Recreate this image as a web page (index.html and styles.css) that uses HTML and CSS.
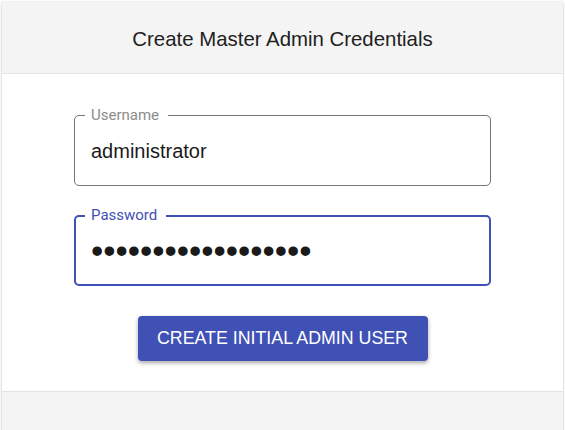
FILE: index.html
```html
<!DOCTYPE html>
<html>
<head>
<meta charset="utf-8">
<link rel="stylesheet" href="styles.css">
</head>
<body>
<div class="card">
  <div class="card-header">Create Master Admin Credentials</div>
  <form class="card-body">
    <fieldset class="field">
      <legend class="field-label">Username</legend>
      <input class="field-input" type="text" value="administrator">
    </fieldset>
    <fieldset class="field field-focused">
      <legend class="field-label">Password</legend>
      <input class="field-input field-secret" type="password" value="administrator12345">
    </fieldset>
    <div class="actions">
      <button class="btn-primary" type="button">CREATE INITIAL ADMIN USER</button>
    </div>
  </form>
  <div class="card-footer"></div>
</div>
</body>
</html>
```

FILE: styles.css
```css
html, body {
  margin: 0;
  padding: 0;
  background: #ffffff;
  font-family: "Liberation Sans", Arial, sans-serif;
  overflow: hidden;
}
.card {
  margin: 2px 2px 0 2px;
  background: #ffffff;
  box-shadow: 0 1px 3px rgba(0,0,0,0.2), 0 0 1px rgba(0,0,0,0.15);
  height: 440px;
  display: flex;
  flex-direction: column;
}
.card-header {
  height: 72px;
  background: #f4f4f4;
  border-bottom: 1px solid #e4e4e4;
  display: flex;
  align-items: center;
  justify-content: center;
  font-size: 20.4px;
  color: #212121;
  padding-top: 3px;
  box-sizing: border-box;
}
.card-body {
  margin: 0;
  padding: 34px 72px 30px 72px;
  display: flex;
  flex-direction: column;
}
.field {
  margin: 0 0 22px 0;
  padding: 0 10px 0 10px;
  border: 1px solid #757575;
  border-radius: 5px;
  height: 76px;
  box-sizing: content-box;
}
.field-label {
  padding: 0 9px 0 6px;
  font-family: Roboto, "Liberation Sans", sans-serif;
  font-size: 15px;
  line-height: 15px;
  color: #8c8c8c;
}
.field-input {
  display: block;
  width: 100%;
  box-sizing: border-box;
  border: none;
  outline: none;
  background: transparent;
  padding: 16px 6px 0 6px;
  font-family: "Liberation Sans", Arial, sans-serif;
  font-size: 20px;
  line-height: 24px;
  height: 40px;
  color: #1a1a1a;
}
.field-focused {
  border: 2px solid #3f51b5;
  padding: 0 9px;
  height: 74px;
}
.field-focused .field-label {
  color: #3f51b5;
}
.field-focused .field-input {
  padding-top: 15px;
}
.field-secret {
  font-size: 35px;
  letter-spacing: 0;
}
.actions {
  display: flex;
  justify-content: center;
  padding-top: 8px;
}
.btn-primary {
  width: 290px;
  height: 45px;
  border: none;
  border-radius: 4px;
  background: #3f51b5;
  color: #ffffff;
  font-family: "Liberation Sans", Arial, sans-serif;
  font-size: 17.8px;
  box-shadow: 0 2px 4px rgba(0,0,0,0.35);
}
.card-footer {
  flex: 1;
  background: #f4f4f4;
  border-top: 1px solid #e4e4e4;
}
```
